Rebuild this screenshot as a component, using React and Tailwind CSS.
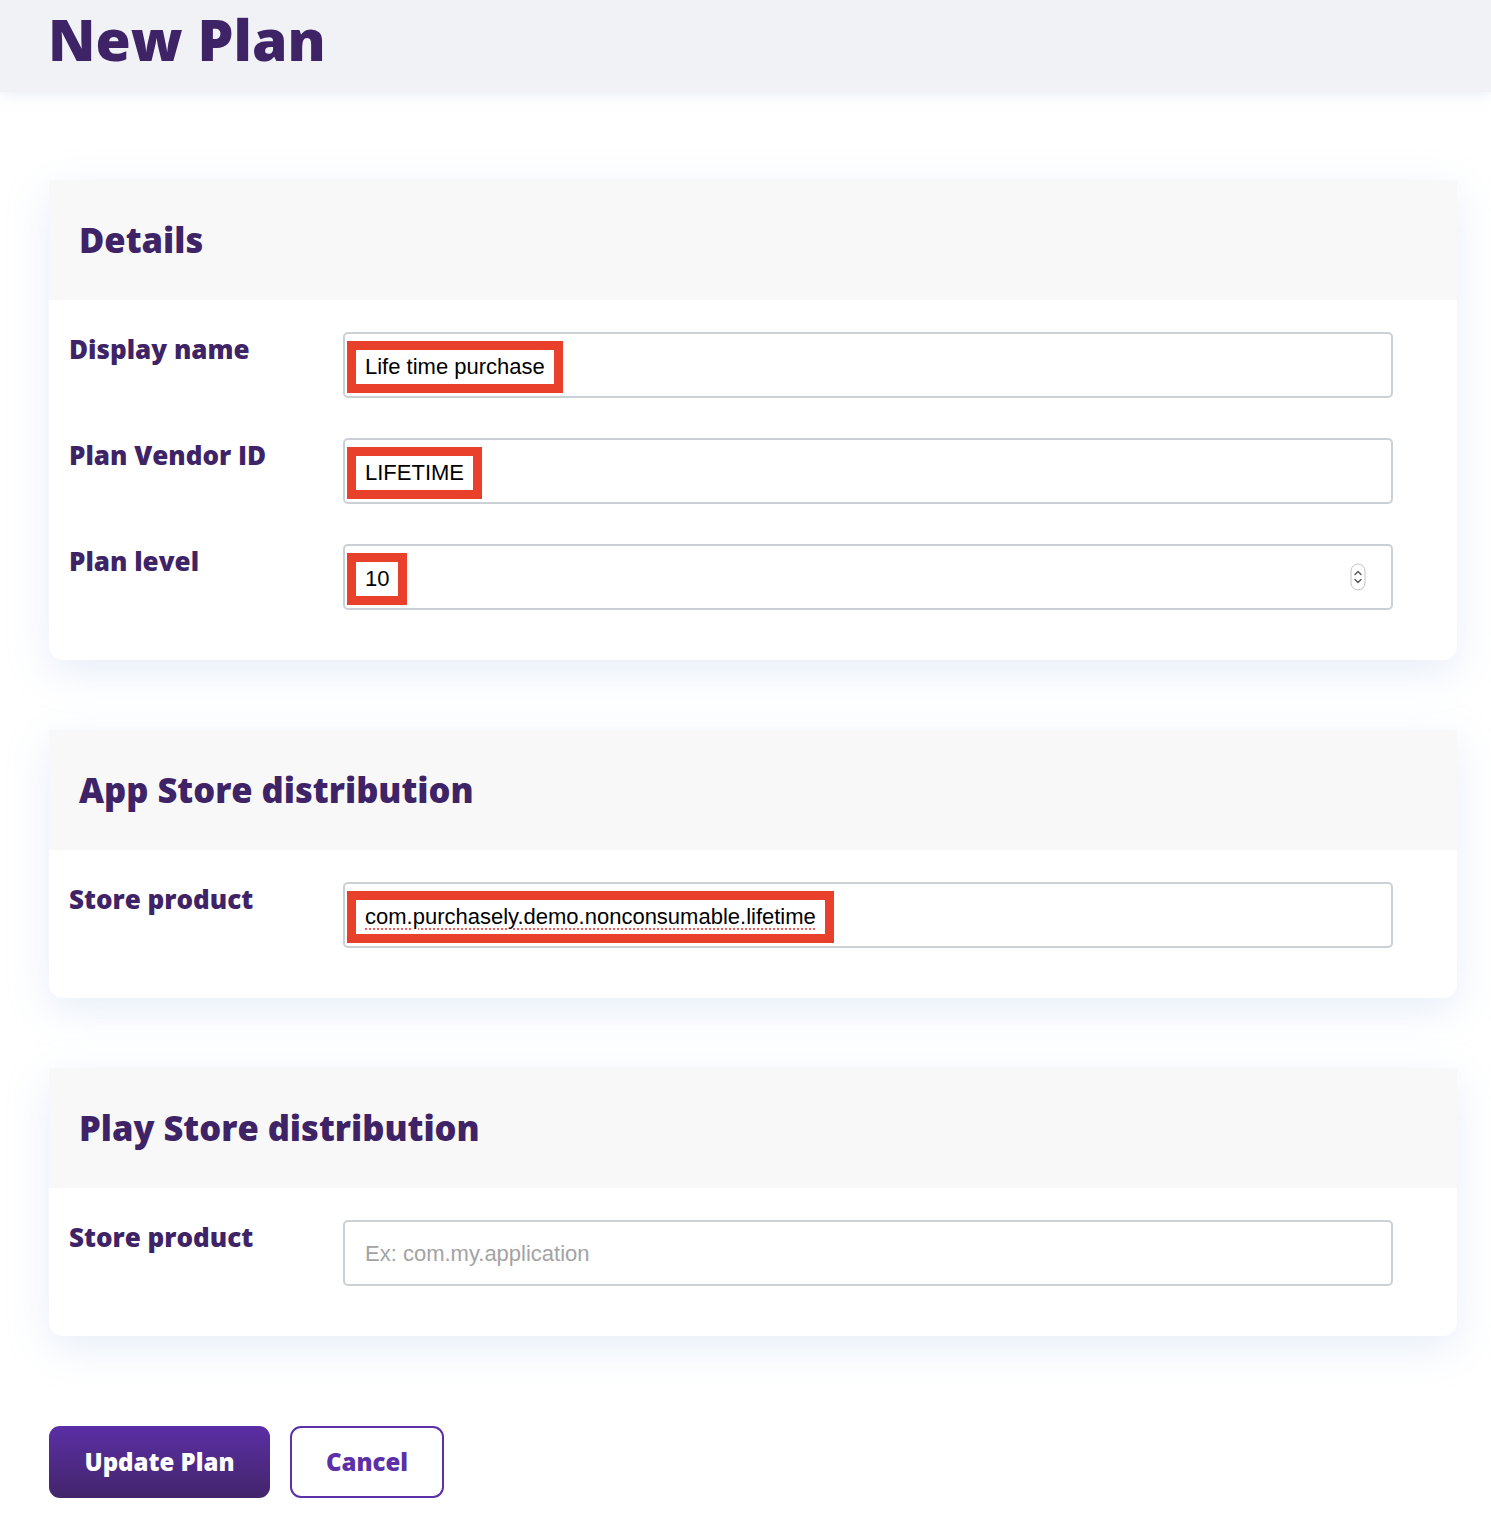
import React from "react";

const heading = { fontFamily: "'Open Sans', Lato, sans-serif" };
const inputFont = { fontFamily: "'Liberation Sans', Arial, sans-serif" };

function Spinner() {
  return (
    <svg width="16" height="28" viewBox="0 0 16 28" className="mr-[25px]">
      <rect x="1" y="1" width="14" height="26" rx="7" fill="#fff" stroke="#bfc3c8" strokeWidth="1" />
      <path d="M5 11.5 L8 8.5 L11 11.5" fill="none" stroke="#555" strokeWidth="1.4" strokeLinecap="round" strokeLinejoin="round" />
      <path d="M5 16.5 L8 19.5 L11 16.5" fill="none" stroke="#555" strokeWidth="1.4" strokeLinecap="round" strokeLinejoin="round" />
    </svg>
  );
}

function Field({ value, placeholder, spinner, dotted }) {
  return (
    <div
      className="flex h-[66px] flex-1 items-center justify-between rounded-[5px] border-2 border-[#cbd0d5] bg-white pl-[2px]"
      style={inputFont}
    >
      {value ? (
        <span className="mt-[4px] border-[9px] border-[#e8402a] bg-white px-[9px] text-[22px] leading-[34px] text-black">
          <span className={dotted ? "underline decoration-dotted decoration-[#e86060] decoration-2 underline-offset-[4px]" : ""}>
            {value}
          </span>
        </span>
      ) : (
        <span className="pl-[18px] text-[22px] text-[#a3a3a3]">{placeholder}</span>
      )}
      {spinner && <Spinner />}
    </div>
  );
}

function Row({ label, children }) {
  return (
    <div className="flex items-start">
      <div
        className="w-[274px] shrink-0 text-[26px] font-extrabold leading-[34px] text-[#3f2367]"
        style={heading}
      >
        {label}
      </div>
      {children}
    </div>
  );
}

function Card({ title, children }) {
  return (
    <section className="rounded-b-[14px] bg-white shadow-[0_12px_40px_rgba(170,195,230,0.28)]">
      <div className="flex h-[120px] items-center bg-[#f8f8f8] pl-[30px]">
        <h2 className="text-[34.5px] font-extrabold leading-[1.2] text-[#3f2367]" style={heading}>
          {title}
        </h2>
      </div>
      <div className="flex flex-col gap-[40px] pb-[50px] pl-[20px] pr-[64px] pt-[32px]">{children}</div>
    </section>
  );
}

export default function App() {
  return (
    <div className="min-h-[1536px] bg-white">
      <header className="h-[92px] bg-[#f1f2f6] pl-[48px] pt-[5px] shadow-[0_4px_12px_rgba(200,215,235,0.35)]">
        <h1 className="text-[57px] font-extrabold leading-[1.2] text-[#3f2367]" style={heading}>
          New Plan
        </h1>
      </header>
      <main className="pl-[49px] pr-[34px] pt-[88px]">
        <div className="flex flex-col gap-[70px]">
          <Card title="Details">
            <Row label="Display name">
              <Field value="Life time purchase" />
            </Row>
            <Row label="Plan Vendor ID">
              <Field value="LIFETIME" />
            </Row>
            <Row label="Plan level">
              <Field value="10" spinner />
            </Row>
          </Card>
          <Card title="App Store distribution">
            <Row label="Store product">
              <Field value="com.purchasely.demo.nonconsumable.lifetime" dotted />
            </Row>
          </Card>
          <Card title="Play Store distribution">
            <Row label="Store product">
              <Field placeholder="Ex: com.my.application" />
            </Row>
          </Card>
        </div>
        <div className="mt-[90px] flex gap-[20px]" style={heading}>
          <button className="h-[72px] w-[221px] rounded-[11px] bg-gradient-to-b from-[#5b2ea6] to-[#43256b] text-[24px] font-extrabold text-white">
            Update Plan
          </button>
          <button className="h-[72px] w-[154px] rounded-[11px] border-2 border-[#5b30a8] bg-white text-[24px] font-extrabold text-[#5b30a8]">
            Cancel
          </button>
        </div>
      </main>
    </div>
  );
}
